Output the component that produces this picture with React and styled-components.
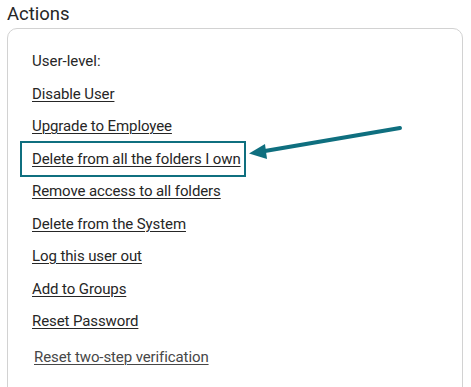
import styled, { createGlobalStyle } from "styled-components";

const Global = createGlobalStyle`
body {
  margin: 0;
  background: #ffffff;
  font-family: Roboto, "Liberation Sans", sans-serif;
  color: #262626;
}
`

const Page = styled.div`
position: relative;
width: 471px;
height: 387px;
overflow: hidden;
padding: 0 8px 0 7px;
box-sizing: border-box;
`

const Heading = styled.h2`
margin: 0;
padding: 3px 0 0 0;
font-size: 18.5px;
font-weight: 400;
line-height: 22px;
color: #262626;
`

const Card = styled.div`
margin-top: 3px;
border: 1px solid #d2d2d2;
border-radius: 10px;
height: 420px;
padding: 22px 0 0 24px;
box-sizing: border-box;
display: flex;
flex-direction: column;
gap: 12.5px;
`

const Label = styled.div`
font-size: 15px;
line-height: 20px;
color: #262626;
`

const ActionLink = styled.a`
display: block;
width: fit-content;
font-size: 15px;
line-height: 20px;
letter-spacing: -0.1px;
color: ${( { muted } ) => muted ? "#474747" : "#262626"};
text-decoration: underline;
text-underline-offset: 2px;
text-decoration-thickness: 1px;
margin-left: ${( { muted } ) => muted ? "2px" : "0"};
margin-top: ${( { muted } ) => muted ? "3px" : "0"};
cursor: pointer;
`

const Highlight = styled.div`
width: fit-content;
margin: -8px 0 -8px -12px;
padding: 6px 3px 6px 10px;
border: 2px solid #0f6f7f;
`

const Arrow = styled.svg`
position: absolute;
left: 244px;
top: 121px;
`

const actions = [
    "Disable User",
    "Upgrade to Employee",
    "Delete from all the folders I own",
    "Remove access to all folders",
    "Delete from the System",
    "Log this user out",
    "Add to Groups",
    "Reset Password",
]

const App = () => {
    return (
        <>
            <Global />
            <Page>
                <Heading>Actions</Heading>
                <Card>
                    <Label>User-level:</Label>
                    {actions.map( ( a ) => a === "Delete from all the folders I own" ? (
                        <Highlight key={a}>
                            <ActionLink>{a}</ActionLink>
                        </Highlight>
                    ) : (
                        <ActionLink key={a}>{a}</ActionLink>
                    ) )}
                    <ActionLink muted>Reset two-step verification</ActionLink>
                </Card>
                <Arrow width="165" height="45" viewBox="0 0 165 45">
                    <line x1="156" y1="7" x2="15" y2="31" stroke="#0f6f7f" strokeWidth="4" strokeLinecap="round" />
                    <polygon points="5,32.5 21,23 23,38" fill="#0f6f7f" />
                </Arrow>
            </Page>
        </>
    )
}

export default App;
